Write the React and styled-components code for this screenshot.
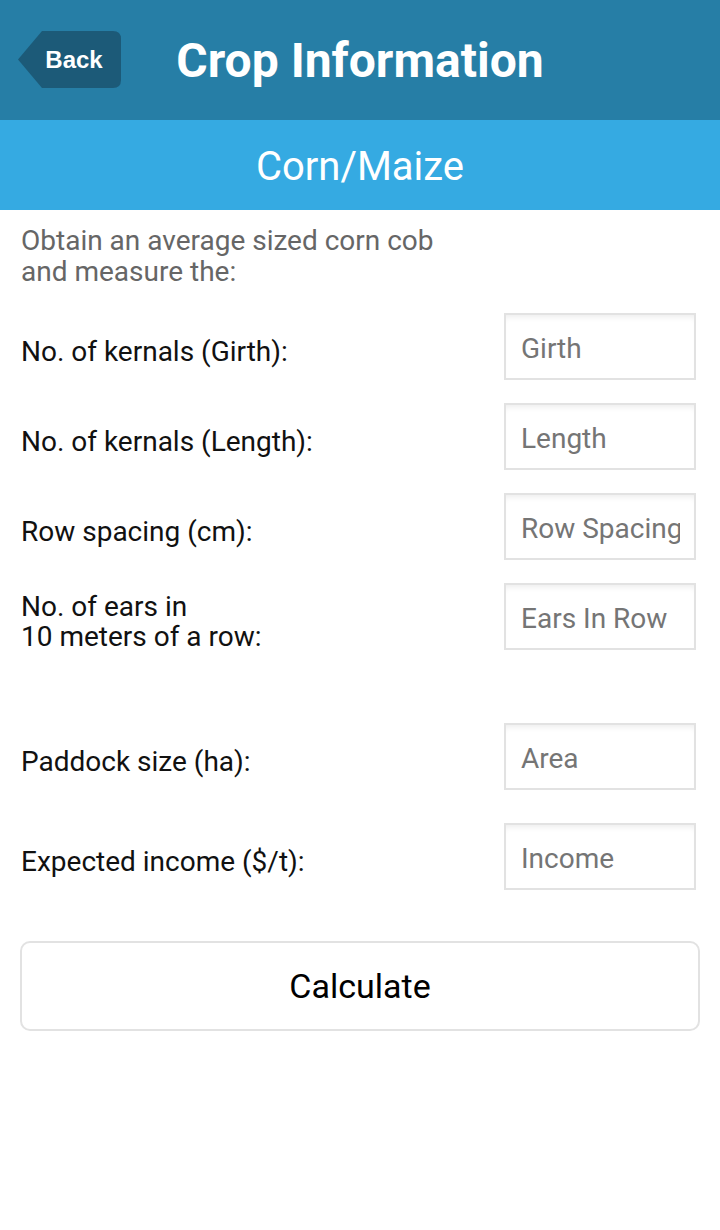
import React from 'react'
import styled, { createGlobalStyle } from 'styled-components'

const GlobalStyle = createGlobalStyle`
    body{
        margin:0;
        background:#ffffff;
        font-family:Roboto, "Noto Sans", sans-serif;
    }`

const Page = styled.div`
    width:720px;
    min-height:1230px;
    background:#fff;`

const TopBar = styled.header`
    position:relative;
    height:120px;
    background-color:#267ea6;
    display:flex;
    align-items:center;
    justify-content:center;`

const BackButton = styled.button`
    position:absolute;
    left:18px;
    top:31px;
    width:103px;
    height:57px;
    border:none;
    padding:0 0 0 9px;
    background-color:#1c5a78;
    clip-path:path('M24 0 H95 Q103 0 103 8 V49 Q103 57 95 57 H24 L0 28.5 Z');
    color:#fff;
    font-family:"Liberation Sans", Arial, sans-serif;
    font-weight:700;
    font-size:24px;
    cursor:pointer;`

const Title = styled.h1`
    margin:0;
    color:#fff;
    font-size:48px;
    font-weight:700;`

const SubBar = styled.div`
    height:90px;
    background-color:#35aae2;
    display:flex;
    align-items:center;
    justify-content:center;
    padding-top:2px;
    box-sizing:border-box;
    color:#fff;
    font-size:40px;`

const Content = styled.main`
    padding:15px 20px 0 21px;`

const Intro = styled.p`
    margin:0 0 26px;
    color:#666;
    font-size:28px;
    line-height:31px;`

const Row = styled.div`
    display:flex;
    align-items:center;
    justify-content:space-between;
    height:67px;
    margin-top:${p => p.gap}px;
    padding-right:4px;`

const Label = styled.label`
    color:#111;
    font-size:28px;
    line-height:30px;
    padding-top:10px;`

const Field = styled.div`
    position:relative;
    width:192px;
    height:67px;
    box-sizing:border-box;
    border:2px solid #e2e2e2;
    box-shadow:inset 0 6px 6px -4px rgba(0,0,0,0.08);
    ::before, ::after{
        content:'';
        position:absolute;
        top:26px;
        width:2px;
        height:12px;
        background:#c8c8c8;
    }
    ::before{ left:-2px; }
    ::after{ right:-2px; }`

const Input = styled.input`
    width:100%;
    height:100%;
    box-sizing:border-box;
    border:none;
    background:transparent;
    padding:4px 14px 0 15px;
    font-family:Roboto, sans-serif;
    font-size:28px;
    color:#333;
    ::placeholder{
        color:#888;
    }
    :focus{
        outline:none;
    }`

const CalcButton = styled.button`
    display:block;
    width:680px;
    height:90px;
    margin:51px 0 0 -1px;
    box-sizing:border-box;
    border:2px solid #e2e2e2;
    border-radius:10px;
    background:#fff;
    font-family:Roboto, sans-serif;
    font-size:34px;
    color:#000;
    cursor:pointer;`

const fields = [
    { label: 'No. of kernals (Girth):', hint: 'Girth', gap: 0 },
    { label: 'No. of kernals (Length):', hint: 'Length', gap: 23 },
    { label: 'Row spacing (cm):', hint: 'Row Spacing', gap: 23 },
    { label: ['No. of ears in', '10 meters of a row:'], hint: 'Ears In Row', gap: 23 },
    { label: 'Paddock size (ha):', hint: 'Area', gap: 73 },
    { label: 'Expected income ($/t):', hint: 'Income', gap: 33 },
]

export default class App extends React.Component{
    render(){
        return(
            <Page>
                <GlobalStyle/>
                <TopBar>
                    <BackButton>Back</BackButton>
                    <Title>Crop Information</Title>
                </TopBar>
                <SubBar>Corn/Maize</SubBar>
                <Content>
                    <Intro>Obtain an average sized corn cob<br/>and measure the:</Intro>
                    {fields.map(f => (
                        <Row key={f.hint} gap={f.gap}>
                            <Label>
                                {Array.isArray(f.label)
                                    ? <>{f.label[0]}<br/>{f.label[1]}</>
                                    : f.label}
                            </Label>
                            <Field>
                                <Input placeholder={f.hint}/>
                            </Field>
                        </Row>
                    ))}
                    <CalcButton>Calculate</CalcButton>
                </Content>
            </Page>
        )
    }
}
